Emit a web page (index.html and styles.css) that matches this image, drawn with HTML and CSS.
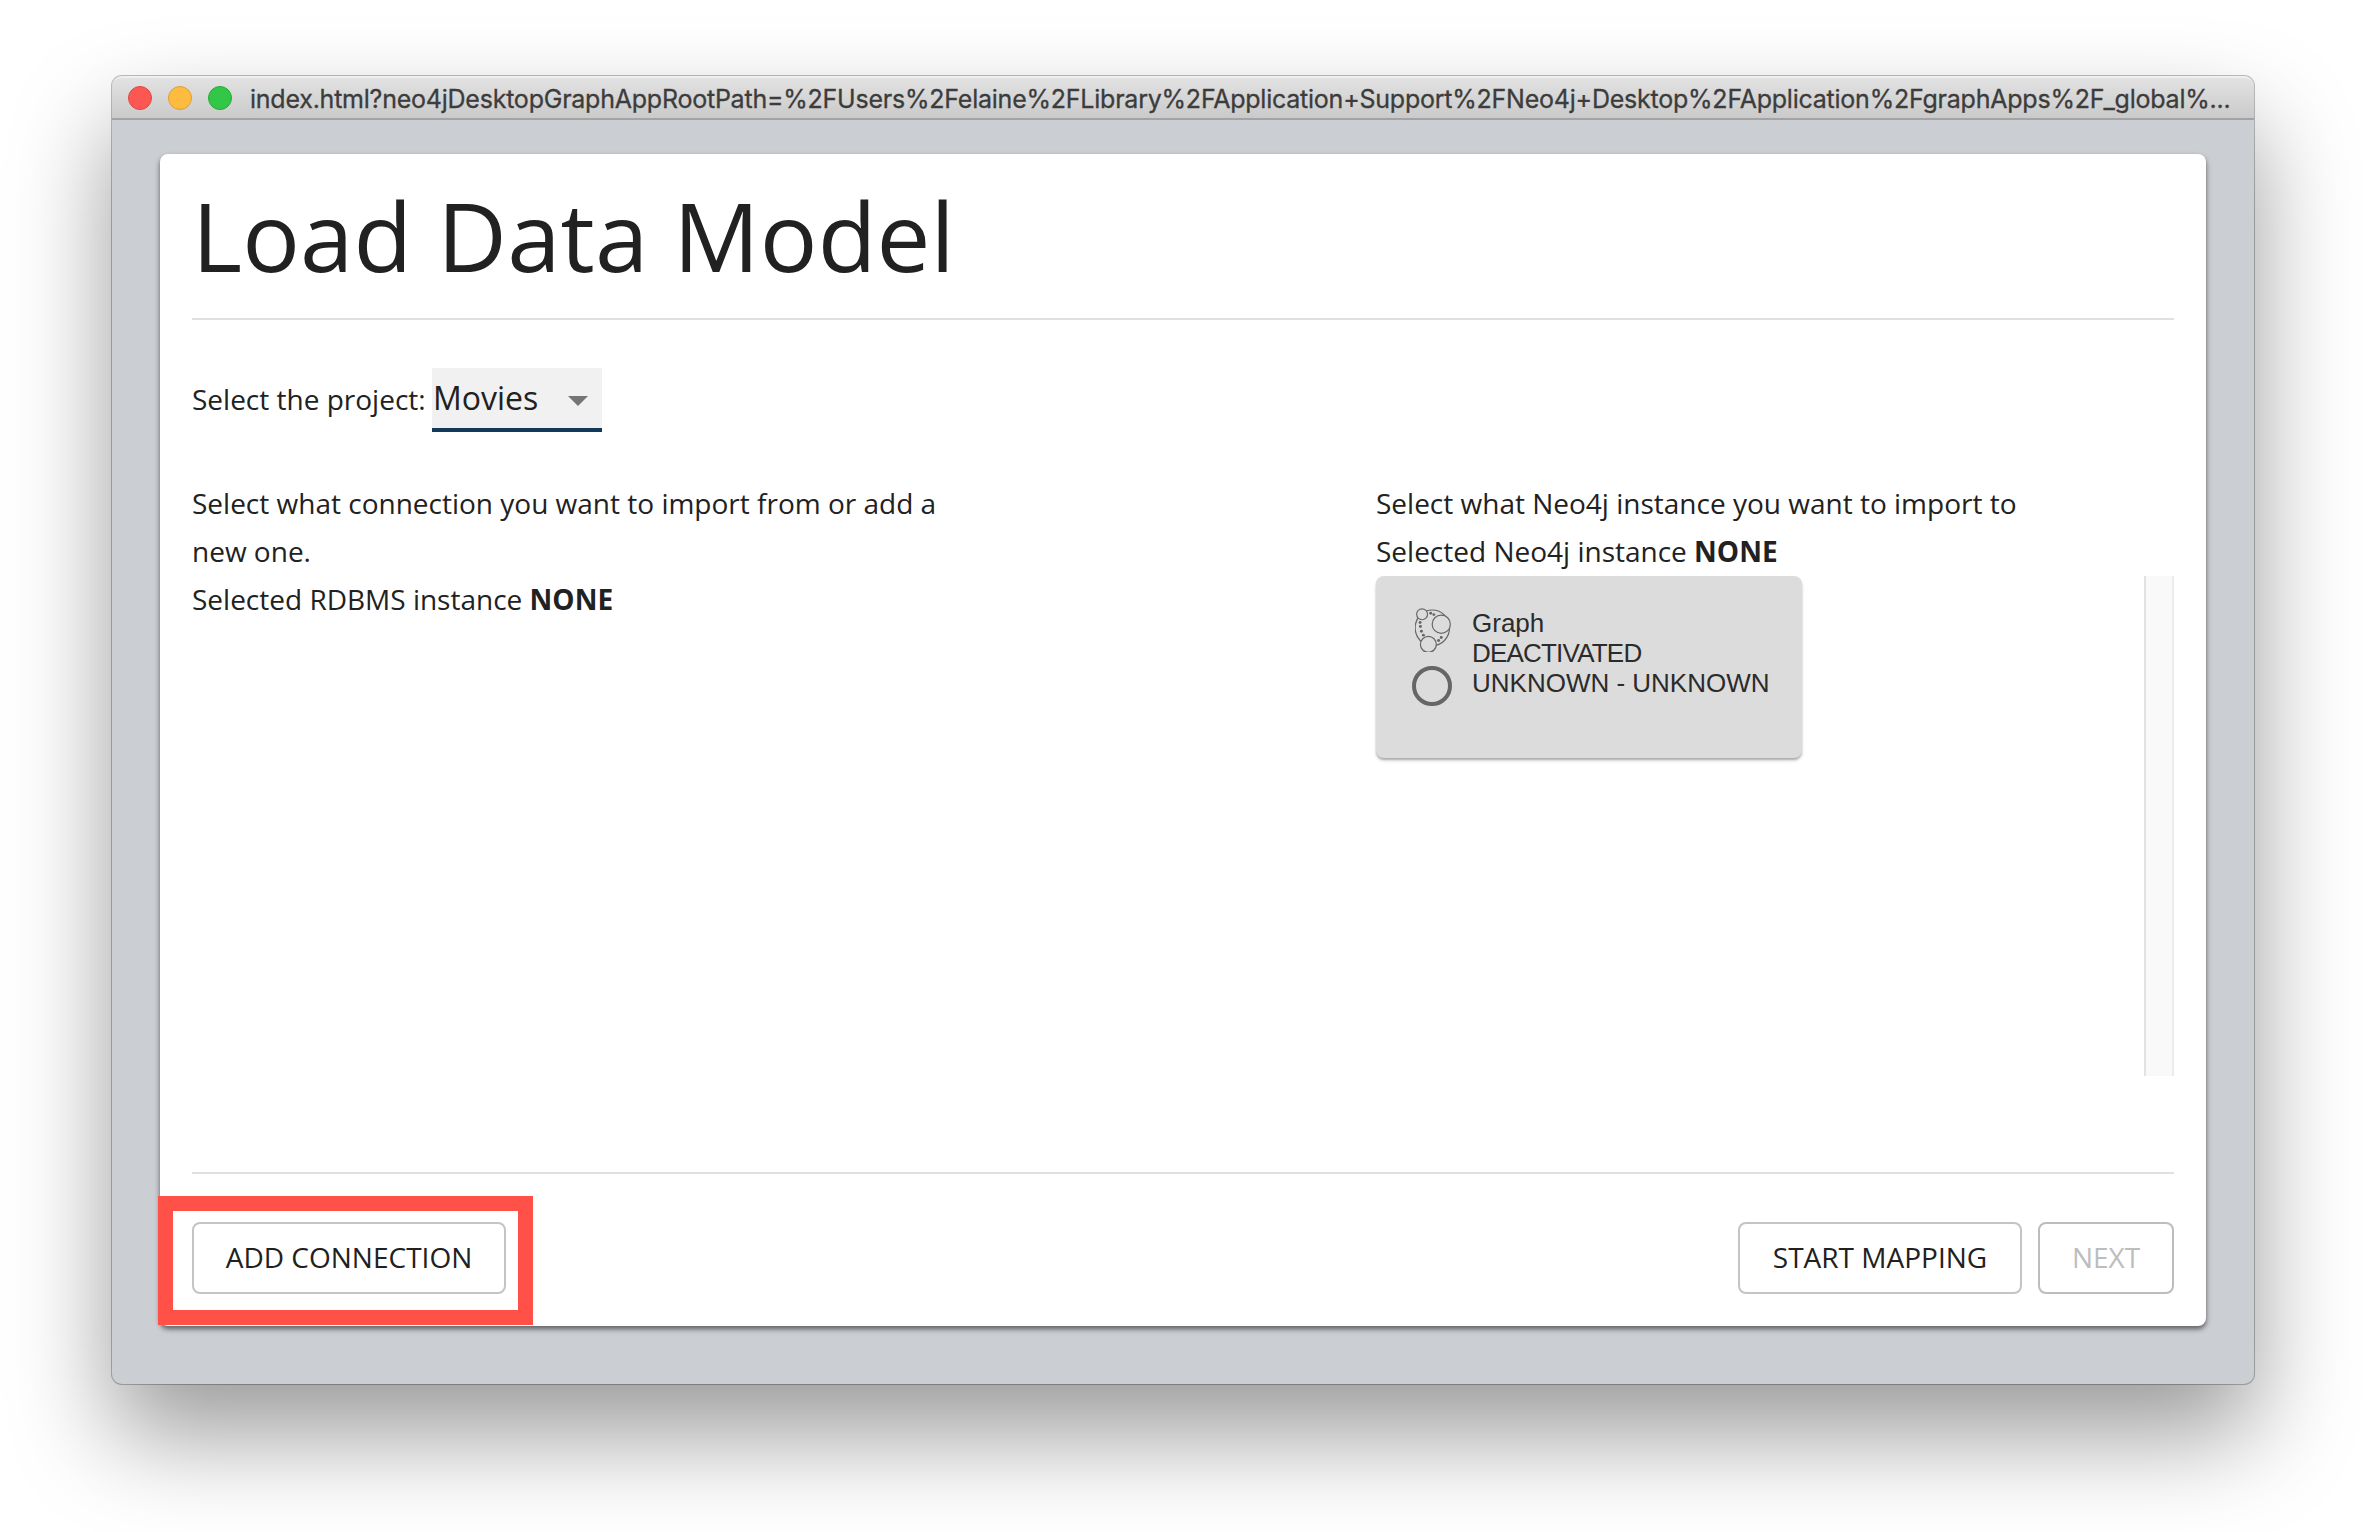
FILE: index.html
```html
<!DOCTYPE html>
<html lang="en">
<head>
<meta charset="utf-8">
<title>Load Data Model</title>
<link rel="stylesheet" href="styles.css">
</head>
<body>
<div class="window">
  <header class="titlebar">
    <span class="light light-close"></span>
    <span class="light light-min"></span>
    <span class="light light-max"></span>
    <span class="window-title">index.html?neo4jDesktopGraphAppRootPath=%2FUsers%2Felaine%2FLibrary%2FApplication+Support%2FNeo4j+Desktop%2FApplication%2FgraphApps%2F_global%...</span>
  </header>
  <main class="card">
    <h1 class="heading">Load Data Model</h1>
    <div class="content">
      <div class="project-row">
        <span class="project-label">Select the project:</span>
        <div class="select">
          <span>Movies</span>
          <svg class="select-arrow" viewBox="0 0 20 10"><path d="M0 0l10 10L20 0z"/></svg>
        </div>
      </div>
      <div class="columns">
        <section class="source">
          <p>Select what connection you want to import from or add a new one.</p>
          <p>Selected RDBMS instance <strong>NONE</strong></p>
        </section>
        <section class="target">
          <p>Select what Neo4j instance you want to import to</p>
          <p>Selected Neo4j instance <strong>NONE</strong></p>
          <div class="instances">
            <article class="instance">
              <div class="instance-icons">
                <svg class="graph-icon" viewBox="75 53 108 133">
                  <g fill="none" stroke="#666" stroke-width="3.6">
                    <ellipse cx="127" cy="113" rx="52" ry="54"/>
                    <g fill="#dcdcdc">
                      <circle cx="96" cy="72" r="16.5"/>
                      <circle cx="154" cy="102" r="27.5"/>
                      <circle cx="115" cy="163" r="24"/>
                    </g>
                  </g>
                  <g fill="#666">
                    <circle cx="122" cy="69" r="4.3"/><circle cx="131.500" cy="73" r="4.3"/>
                    <circle cx="90" cy="97" r="4.500"/><circle cx="91" cy="109" r="4.500"/>
                    <circle cx="94" cy="123" r="4.500"/><circle cx="100" cy="135" r="4.500"/>
                    <circle cx="154" cy="142" r="4.500"/><circle cx="146" cy="151" r="4.500"/>
                  </g>
                </svg>
                <svg class="radio-icon" viewBox="0 0 40 40"><circle cx="20" cy="20" r="18" fill="none" stroke="#666" stroke-width="4"/></svg>
              </div>
              <div class="instance-text">
                <div>Graph</div>
                <div class="status">DEACTIVATED</div>
                <div>UNKNOWN - UNKNOWN</div>
              </div>
            </article>
            <div class="scroll-track"></div>
          </div>
        </section>
      </div>
    </div>
    <footer class="actions">
      <div class="highlighted"><button class="button add">ADD CONNECTION</button></div>
      <button class="button start">START MAPPING</button>
      <button class="button next" disabled>NEXT</button>
    </footer>
  </main>
</div>
</body>
</html>
```
FILE: styles.css
```css
*, *::after { box-sizing: border-box; }

body {
  margin: 0;
  padding: 76px 112px 0;
  height: 1532px;
  overflow: hidden;
  background: #fff;
  color: #212121;
  font: 28px/48px "Open Sans", sans-serif;
}

p, h1 { margin: 0; }

.window {
  height: 1308px;
  border-radius: 10px;
  background: #cbced3;
  box-shadow: 0 0 0 1px rgba(0, 0, 0, .25), 0 50px 100px rgba(0, 0, 0, .4);
}

.titlebar {
  display: flex;
  align-items: center;
  height: 44px;
  padding: 0 16px;
  border-radius: 10px 10px 0 0;
  border-top: 2px solid #efefef;
  border-bottom: 2px solid #a3a3a3;
  background: linear-gradient(#e2e2e2, #cacaca);
}

.light {
  width: 24px;
  height: 24px;
  margin-right: 16px;
  border-radius: 50%;
  border: 1px solid;
}
.light-close { background: #fc5753; border-color: #df4744; }
.light-min { background: #fdbc40; border-color: #de9f34; }
.light-max { background: #33c748; border-color: #27aa35; }

.window-title {
  margin: 2px 0 0 2px;
  color: #3c3c3c;
  font: 25px/40px Inter, sans-serif;
  letter-spacing: -.23px;
  -webkit-text-stroke: .3px #3c3c3c;
  white-space: nowrap;
}

.card {
  display: flex;
  flex-direction: column;
  height: 1172px;
  margin: 34px 48px 0;
  padding: 25px 32px 32px;
  border-radius: 8px;
  background: #fff;
  box-shadow: 0 3px 6px rgba(0, 0, 0, .24), 0 3px 4px rgba(0, 0, 0, .36);
}

.heading {
  font-size: 96px;
  font-weight: 400;
  line-height: 111px;
  letter-spacing: .1px;
}

.content {
  flex: 1;
  margin-top: 28px;
  padding-top: 48px;
  border-top: 2px solid #e0e0e0;
  border-bottom: 2px solid #e0e0e0;
}

.project-row {
  display: flex;
  align-items: baseline;
  height: 64px;
}
.project-label { width: 240px; }

.select {
  display: flex;
  align-items: center;
  justify-content: space-between;
  width: 170px;
  height: 64px;
  padding: 0 14px 0 1px;
  border-bottom: 4px solid #12385a;
  background: #f1f1f1;
  font-size: 32px;
  line-height: 58px;
}
.select-arrow {
  width: 20px;
  height: 10px;
  margin-top: 5px;
  fill: #757575;
}

.columns {
  display: flex;
  justify-content: space-between;
  margin-top: 47px;
}
.source { width: 798px; }
.target { width: 798px; }

.instances {
  display: flex;
  align-items: flex-start;
  justify-content: space-between;
  height: 500px;
  margin-top: 1px;
}

.instance {
  display: flex;
  width: 426px;
  height: 182px;
  padding: 32px 0 0 36px;
  border-radius: 8px;
  background: #dcdcdc;
  box-shadow: 0 3px 4px -1px rgba(0, 0, 0, .2), 0 2px 2px rgba(0, 0, 0, .2);
}

.instance-icons {
  display: flex;
  flex-direction: column;
  width: 60px;
}
.graph-icon { width: 36px; height: 44px; margin-left: 3px; }
.radio-icon { width: 40px; height: 40px; margin-top: 14px; }

.instance-text {
  color: #2b2b2b;
  font: 26px/30px "Liberation Sans", Arial, sans-serif;
}
.status { letter-spacing: -.8px; }

.scroll-track {
  width: 30px;
  height: 500px;
  border-left: 2px solid #e2e2e2;
  border-right: 2px solid #ececec;
  background: #f9f9f9;
}

.actions {
  display: flex;
  padding-top: 48px;
}

.highlighted {
  position: relative;
  margin-right: auto;
}
.highlighted::after {
  content: "";
  position: absolute;
  left: -34px;
  top: -26px;
  width: 375px;
  height: 129px;
  border: 15px solid #ff5148;
}

.button {
  display: block;
  height: 72px;
  padding: 0 0 2px;
  border: 2px solid #c4c4c4;
  border-radius: 8px;
  background: none;
  color: #212121;
  font: 28px/48px "Open Sans", sans-serif;
  white-space: nowrap;
}
.add { width: 314px; }
.start { width: 284px; margin-right: 16px; }
.next { width: 136px; color: #bdbdbd; border-color: #bdbdbd; }
```
